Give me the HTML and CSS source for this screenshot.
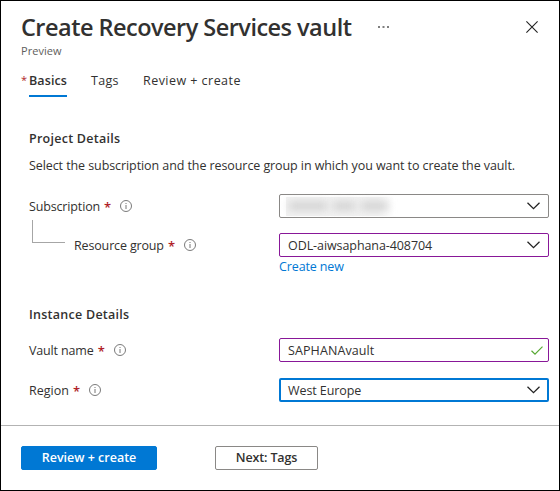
FILE: index.html
```html
<!DOCTYPE html>
<html lang="en">
<head>
<meta charset="utf-8">
<title>Create Recovery Services vault</title>
<link rel="stylesheet" href="styles.css">
</head>
<body>
<svg width="0" height="0" class="defs">
  <symbol id="info" viewBox="0 0 12 12"><circle cx="6" cy="6" r="5.5" fill="none" stroke="#6b6b6b" stroke-width=".9"/><path d="M6 5v4M6 3v1" stroke="#777" stroke-width="1" fill="none"/></symbol>
  <symbol id="chevron" viewBox="0 0 13 8"><path d="M.5 .7 6.5 6.7 12.5 .7" fill="none" stroke="#222" stroke-width="1.25"/></symbol>
</svg>
<main class="blade">
  <header class="head">
    <h1 class="title">Create Recovery Services vault</h1>
    <svg class="dots" width="11" height="2" viewBox="0 0 11 2"><path d="M0 1h2M4.5 1h2M9 1h2" stroke="#555" stroke-width="1.3"/></svg>
    <svg class="close" width="12" height="12" viewBox="0 0 12 12"><path d="M.4 .4 11.6 11.6M11.6 .4 .4 11.6" stroke="#222" stroke-width="1.1"/></svg>
  </header>
  <p class="preview">Preview</p>
  <nav class="tabs">
    <span class="req tab-req">*</span>
    <a class="tab active">Basics</a>
    <a class="tab tags">Tags</a>
    <a class="tab review">Review + create</a>
  </nav>
  <section class="section">
    <h2 class="heading project">Project Details</h2>
    <p class="desc">Select the subscription and the resource group in which you want to create the vault.</p>
    <div class="row subscription">
      <label class="label"><span class="name">Subscription</span><span class="req">*</span><svg class="info"><use href="#info"/></svg></label>
      <div class="field gray"><span class="redacted"><i class="smudge a"></i><i class="smudge b"></i><i class="smudge c"></i></span><svg class="chevron"><use href="#chevron"/></svg></div>
    </div>
    <div class="row group">
      <label class="label"><i class="elbow"></i><span class="name">Resource group</span><span class="req">*</span><svg class="info"><use href="#info"/></svg></label>
      <div class="field purple"><span class="value v-group">ODL-aiwsaphana-408704</span><svg class="chevron"><use href="#chevron"/></svg></div>
    </div>
    <a class="link">Create new</a>
  </section>
  <section class="section">
    <h2 class="heading instance">Instance Details</h2>
    <div class="row vault">
      <label class="label"><span class="name">Vault name</span><span class="req">*</span><svg class="info"><use href="#info"/></svg></label>
      <div class="field purple"><span class="value v-vault">SAPHANAvault</span><svg class="check" viewBox="0 0 12 9"><path d="M.5 4.8 4 8.1 11.5 .6" fill="none" stroke="#57a832" stroke-width="1.2"/></svg></div>
    </div>
    <div class="row region">
      <label class="label"><span class="name n-region">Region</span><span class="req">*</span><svg class="info"><use href="#info"/></svg></label>
      <div class="field blue"><span class="value v-region">West Europe</span><svg class="chevron"><use href="#chevron"/></svg></div>
    </div>
  </section>
  <footer class="foot">
    <button class="btn primary">Review + create</button>
    <button class="btn next">Next: Tags</button>
  </footer>
</main>
</body>
</html>
```

FILE: styles.css
```css
* { box-sizing: border-box; margin: 0; padding: 0; }
body { background: #fff; color: #323130; font: 12.5px/18px "Open Sans", "Noto Sans", sans-serif; white-space: nowrap; }
.defs { display: none; }
.blade { width: 560px; height: 491px; border: 1px solid #000; display: flex; flex-direction: column; overflow: hidden; }
.head { height: 34px; margin-top: 9px; padding: 0 21px 0 20px; display: flex; align-items: center; flex: none; }
.title { width: 357px; font-size: 23.5px; line-height: 32px; font-weight: 600; letter-spacing: -.52px; }
.close { margin-left: auto; }
.preview { height: 14px; padding-left: 20px; font-size: 11px; line-height: 14px; color: #605e5c; letter-spacing: .05px; }
.tabs { height: 26px; margin-top: 13px; padding-left: 20px; display: flex; flex: none; }
.req { color: #b01e28; font-size: 13px; font-weight: 600; }
.tab-req { width: 8px; font-size: 11px; line-height: 17px; font-weight: 400; }
.tab { height: 26px; padding-top: 1px; }
.active { width: 38px; font-weight: 600; border-bottom: 2px solid #0078d4; letter-spacing: .1px; }
.tags { margin-left: 24px; width: 52px; letter-spacing: .3px; }
.review { letter-spacing: .46px; }
.heading { height: 18px; padding-left: 28px; font-size: 12.5px; line-height: 18px; font-weight: 600; letter-spacing: .26px; }
.project { margin-top: 33px; }
.desc { height: 18px; margin-top: 9px; padding-left: 28px; letter-spacing: -.084px; }
.row { height: 24px; display: flex; }
.label { width: 278px; padding-left: 28px; display: flex; align-items: center; }
.name { padding-top: 2px; letter-spacing: -.15px; }
.n-region { letter-spacing: 0; }
.label .req { margin-left: 4px; width: 6px; padding-top: 2px; }
.info { width: 12px; height: 12px; margin-left: 10px; }
.field { width: 270px; height: 24px; border: 1px solid #8a8886; border-radius: 2px; padding: 0 8px; display: flex; align-items: center; }
.field svg { margin-left: auto; flex: none; }
.value { padding-top: 2px; }
.v-group { letter-spacing: -.08px; }
.v-vault { letter-spacing: .1px; }
.v-region { letter-spacing: -.08px; }
.chevron { width: 13px; height: 8px; }
.purple { border-color: #881798; }
.blue { border: 2px solid #0078d4; padding: 0 7px; }
.check { width: 12px; height: 9px; margin-right: -3px; }
.subscription { margin-top: 19px; }
.redacted { width: 108px; height: 19px; margin-left: -2px; background: linear-gradient(90deg, #f2f2f2 85%, #fff); display: flex; align-items: center; gap: 6px; }
.smudge { height: 8px; background: #cfcfcf; filter: blur(4px); }
.a { width: 38px; margin-left: 3px; }
.b { width: 22px; }
.c { width: 27px; }
.group { margin-top: 15px; }
.elbow { width: 33px; height: 23px; margin: -27px 9px 0 3px; border: solid #a6a6a6; border-width: 0 0 1px 1px; }
.link { display: block; height: 18px; margin-left: 278px; padding-top: 1px; color: #0078d4; letter-spacing: -.12px; }
.instance { margin-top: 30px; padding-top: 1px; }
.vault { margin-top: 15px; }
.region { margin-top: 16px; }
.foot { margin-top: 23px; padding: 20px; border-top: 1px solid #b3b3b3; display: flex; gap: 58px; }
.btn { height: 24px; border: 1px solid #8a8886; border-radius: 2px; background: #fff; color: #323130; font: 600 12.5px/18px "Open Sans", sans-serif; }
.primary { width: 136px; background: #0078d4; border-color: #0078d4; color: #fff; }
.next { width: 103px; letter-spacing: -.15px; }
```
